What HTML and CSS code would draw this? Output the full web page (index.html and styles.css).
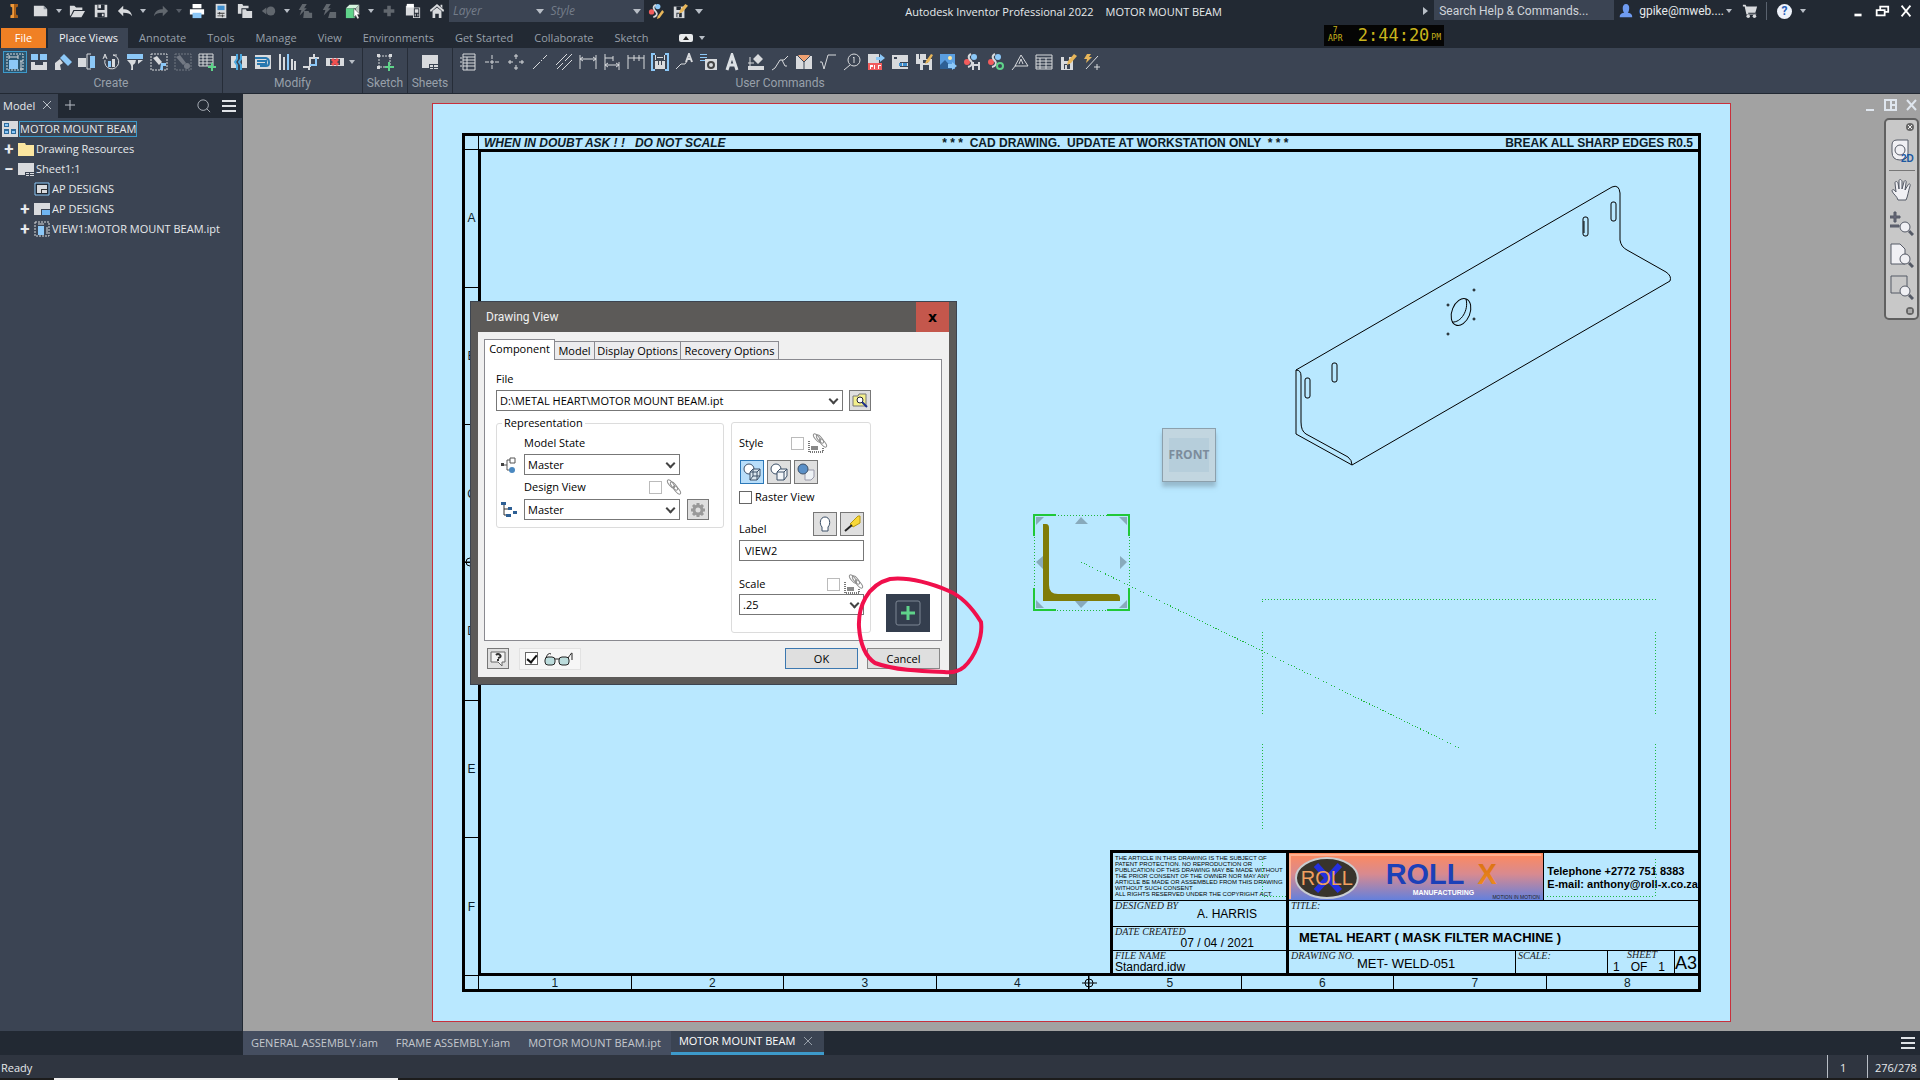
FILE: index.html
```html
<!DOCTYPE html>
<html lang="en">
<head>
  <meta charset="UTF-8">
  <meta name="viewport" content="width=device-width, initial-scale=1.0">
  <title>Autodesk Inventor Professional 2022 - MOTOR MOUNT BEAM</title>
  <link rel="stylesheet" href="styles.css">
</head>
<body>

  <!-- Title bar -->
  <header class="titlebar">
    <div class="quick">
      <svg class="ico app" viewBox="0 0 18 18"><path fill="#f09a3a" d="M5 1h8v3l-2 1v8l2 1v3H5v-3l2-1V5L5 4z"/><path fill="#a85c14" d="M9 1h4v3l-2 1v8l2 1v3H9z"/></svg>
      <button class="tool" aria-label="New"><svg class="ico" viewBox="0 0 18 18"><path d="M1 3h11l4 4v8H1z"/><path fill="#8d949d" d="M12 3v4h4z"/></svg></button>
      <i class="caret"></i>
      <button class="tool" aria-label="Open"><svg class="ico" viewBox="0 0 18 18"><path d="M1 3h5l2 2h7v3H5l-3 6H1z"/><path d="M6 9h12l-4 7H2z"/></svg></button>
      <button class="tool" aria-label="Save"><svg class="ico" viewBox="0 0 18 18"><path d="M2 2h14v14H2z"/><path fill="#222933" d="M5 2h8v6H5zM5 11h8v5H5z"/><path d="M6 2h3v4H6zM10 12h2v3h-2zM6 9h7v1H6z"/></svg></button>
      <button class="tool" aria-label="Undo"><svg class="ico" viewBox="0 0 18 18"><path d="M7 3v4c5 0 9 2 10 8-2-3-5-4-10-4v4L1 9z"/></svg></button>
      <i class="caret"></i>
      <button class="tool off" aria-label="Redo"><svg class="ico" viewBox="0 0 18 18"><path d="M11 3v4c-5 0-9 2-10 8 2-3 5-4 10-4v4l6-6z"/></svg></button>
      <i class="caret off"></i>
      <button class="tool" aria-label="Print"><svg class="ico" viewBox="0 0 18 18"><path fill="#fff" d="M4 1h10v5H4zM1 7h16v6H1z"/><path fill="#8cc8f8" d="M4 11h10v6H4z"/></svg></button>
      <button class="tool" aria-label="Properties"><svg class="ico" viewBox="0 0 18 18"><path d="M3 1h12v16H3z"/><path fill="#3f8fd0" d="M5 3h8v5H5z"/><path fill="#333" d="M5 11h8v1H5zM5 14h8v1H5zM7 10h1v3H7zM10 13h1v3h-1z"/></svg></button>
      <button class="tool" aria-label="Projects"><svg class="ico" viewBox="0 0 18 18"><path d="M1 1h5l1 2h6v3H5v6H1z"/><path d="M6 7h4l1 2h6v8H6z"/></svg></button>
      <button class="tool off" aria-label="Select"><svg class="ico" viewBox="0 0 18 18"><circle cx="11" cy="9" r="5"/><path d="M1 9l5-4v8z"/></svg></button>
      <i class="caret"></i>
      <button class="tool off" aria-label="Local update"><svg class="ico" viewBox="0 0 18 18"><path d="M6 1h5L8 6h3l-8 8 2-6H2zM8 9h5l1 2h3v6H7z"/></svg></button>
      <button class="tool off" aria-label="Global update"><svg class="ico" viewBox="0 0 18 18"><path d="M6 1h5L8 6h3l-8 8 2-6H2zM10 10h7v7h-9z"/></svg></button>
      <button class="tool" aria-label="Select bodies"><svg class="ico" viewBox="0 0 18 18"><path fill="#5fd38a" d="M1 6h10v11H1z"/><path fill="#d6f5df" d="M1 6l4-4h11l-4 4z"/><path fill="#b9c7bd" d="M12 6l4-4v10l-4 4z"/><path fill="#fff" stroke="#222" stroke-width=".5" d="M10 6l7 7h-3l2 4-2 1-2-4-2 2z"/></svg></button>
      <i class="caret"></i>
      <button class="tool off" aria-label="Add"><svg class="ico" viewBox="0 0 18 18"><path d="M7 3h4v4h4v4h-4v4H7v-4H3V7h4z"/></svg></button>
      <button class="tool" aria-label="Measure"><svg class="ico" viewBox="0 0 18 18"><path d="M1 3h9v11H1zM9 5h8v12H9z"/><path fill="#fff" d="M2 1h8v4H2z"/><path fill="#222933" d="M10 6h6v10h-6z"/><path d="M11 7h4v4h-4zM11 12h1v3h-1zM14 12h1v3h-1z"/></svg></button>
      <button class="tool" aria-label="Home"><svg class="ico" viewBox="0 0 18 18"><path d="M9 1l8 7-1 2-7-6-7 6-1-2z"/><path d="M4 9l5-4 5 4v8h-3v-5H7v5H4zM13 2h2v4l-2-2z"/></svg></button>
      <div class="lookup"><span>Layer</span><i class="caret"></i></div>
      <div class="lookup"><span>Style</span><i class="caret"></i></div>
      <button class="tool" aria-label="Styles editor"><svg class="ico" viewBox="0 0 18 18"><circle cx="11" cy="4" r="3" fill="#8cc8f8"/><circle cx="4" cy="10" r="3" fill="#f25c5c"/><path class="ln b" d="M9 2c-5 2-2 6 0 8s1 5-3 6"/><path fill="#e8b65a" d="M11 15l5-7 2 2-5 7-3 1z"/></svg></button>
      <button class="tool" aria-label="Save styles"><svg class="ico" viewBox="0 0 18 18"><path d="M2 4h12v13H2z"/><path fill="#222933" d="M5 4h5v4H5zM5 11h6v5H5z"/><path d="M6 12h2v4H6z"/><path fill="#e8b65a" d="M9 8l6-7 3 2-6 7-4 2z"/></svg></button>
      <i class="caret bar"></i>
    </div>
    <h1 class="caption"><span>Autodesk Inventor Professional 2022</span><span>MOTOR MOUNT BEAM</span></h1>
    <div class="account">
      <i class="caret right"></i>
      <input class="search" type="text" aria-label="Search" placeholder="Search Help &amp; Commands...">
      <svg class="ico user" viewBox="0 0 18 18"><path fill="#6f9bf0" d="M9 1c5 0 4 8 2 10 5 1 5 3 5 5H2c0-2 0-4 5-5C5 9 4 1 9 1z"/></svg>
      <a class="signin" href="#">gpike@mweb....</a><i class="caret"></i>
      <button class="tool cart" aria-label="Store"><svg class="ico" viewBox="0 0 18 18"><path d="M1 2h3l1 2h12l-2 7H7v1h9v1H5L3 4H1z"/><circle cx="7" cy="15" r="2"/><circle cx="14" cy="15" r="2"/></svg></button>
      <i class="rule"></i>
      <button class="help" aria-label="Help">?</button><i class="caret"></i>
    </div>
    <div class="winbtns">
      <button aria-label="Minimize"><svg class="ico" viewBox="0 0 18 18"><path fill="#fff" d="M5 12h8v3H5z"/></svg></button>
      <button aria-label="Restore"><svg class="ico" viewBox="0 0 18 18"><path fill="none" stroke="#fff" stroke-width="2" d="M7 7V4h9v6h-3M3 8h9v6H3z"/></svg></button>
      <button aria-label="Close"><svg class="ico" viewBox="0 0 18 18"><path fill="none" stroke="#fff" stroke-width="2" d="M4 3l10 12M14 3L4 15"/></svg></button>
    </div>
  </header>

  <!-- Ribbon tabs -->
  <nav class="tabs">
    <a class="file" href="#">File</a>
    <a class="active" href="#">Place Views</a>
    <a href="#">Annotate</a>
    <a href="#">Tools</a>
    <a href="#">Manage</a>
    <a href="#">View</a>
    <a href="#">Environments</a>
    <a href="#">Get Started</a>
    <a href="#">Collaborate</a>
    <a href="#">Sketch</a>
    <button class="fold" aria-label="Minimize ribbon"></button><i class="caret"></i>
    <div class="clock"><small>7<br>APR</small><b>2:44:20</b><small class="pm">PM</small></div>
  </nav>

  <!-- Ribbon panels -->
  <section class="ribbon">
    <div class="group create">
      <div class="icons">
        <button class="tool on" aria-label="Base view"><svg class="ico" viewBox="0 0 18 18"><path class="ln dash" d="M1 1h16v16H1z"/><path fill="#8cc8f8" d="M3 7h9v9H3z"/><path class="ln" d="M3 4h9M3 2v4M12 2v4M15 8v8M14 8h3M14 16h3"/></svg></button>
        <button class="tool" aria-label="Projected view"><svg class="ico" viewBox="0 0 18 18"><path fill="#8cc8f8" d="M1 1h7v6H1zM10 1h7v6h-7z"/><path d="M1 9h4v3h8V9h4v8H1z"/></svg></button>
        <button class="tool" aria-label="Auxiliary view"><svg class="ico" viewBox="0 0 18 18"><path fill="#8cc8f8" d="M6 5l4-4 8 8-4 4z"/><path d="M1 10l5-4 3 4-3 2 1 5H1z"/></svg></button>
        <button class="tool" aria-label="Section view"><svg class="ico" viewBox="0 0 18 18"><path d="M0 5h8v9H0z"/><path fill="#8cc8f8" d="M12 3h5v12h-5z"/><path class="ln" d="M13 1H9v15h4"/></svg></button>
        <button class="tool" aria-label="Detail view"><svg class="ico" viewBox="0 0 18 18"><path class="ln" d="M3 7a7 7 0 1 0 8-5M11 2h4"/><path class="ln" d="M1 6l2-5 2 5M2 4h2"/><path fill="#8cc8f8" d="M6 8h3v6H6z"/><path d="M10 6h3v8h-3z"/></svg></button>
        <button class="tool" aria-label="Overlay view"><svg class="ico" viewBox="0 0 18 18"><path fill="#8cc8f8" d="M1 1h16v5H1z"/><path d="M1 7h9c-1 3 0 3-3 5v5H5c1-4 0-6-4-10zM12 7h5l-5 4z"/></svg></button>
        <button class="tool" aria-label="Draft view"><svg class="ico" viewBox="0 0 18 18"><path class="ln dash" d="M1 1h16v16H1z"/><path d="M3 5l4-2 5 6-3 3z"/><path fill="#8cc8f8" d="M11 10h5v3h-3v4h-3z"/></svg></button>
        <button class="tool off" aria-label="Nailboard"><svg class="ico" viewBox="0 0 18 18"><path class="ln dash" d="M1 1h16v16H1z"/><path d="M2 4l4-2 6 8-3 2z"/><circle cx="13" cy="13" r="3"/></svg></button>
        <button class="tool" aria-label="Table"><svg class="ico" viewBox="0 0 18 18"><path class="ln" d="M1 1h14v12H1zM1 4h14M1 7h14M1 10h14M5 1v12M9 1v12"/><path fill="#5fd38a" d="M13 10h2v3h3v2h-3v3h-2v-3h-3v-2h3z"/></svg></button>
      </div>
      <span>Create</span>
    </div>
    <div class="group">
      <div class="icons">
        <button class="tool" aria-label="Break"><svg class="ico" viewBox="0 0 18 18"><path d="M1 3h5v12H1zM12 3h5v12h-5z"/><path fill="none" stroke="#4aa8e0" stroke-width="2" d="M7 1v5l-2 3 2 3v5M11 1v5l-2 3 2 3v5"/></svg></button>
        <button class="tool" aria-label="Break out"><svg class="ico" viewBox="0 0 18 18"><path d="M1 2h16v14H1z"/><path fill="none" stroke="#2878b0" stroke-width="2" d="M1 5h11c4 1 4 8 0 8H6M3 8h9v3H3"/></svg></button>
        <button class="tool" aria-label="Slice"><svg class="ico" viewBox="0 0 18 18"><path d="M1 1h2v16H1zM5 4h2v13H5zM13 6h2v11h-2zM16 8h2v9h-2z"/><path fill="#8cc8f8" d="M9 1h2v16H9z"/></svg></button>
        <button class="tool" aria-label="Alignment"><svg class="ico" viewBox="0 0 18 18"><path class="ln b" d="M1 14h6v3M8 14V5h9M12 1v4"/><path fill="none" stroke="#8cc8f8" stroke-width="2" d="M8 12h6V5"/></svg></button>
        <button class="tool" aria-label="Suppress"><svg class="ico" viewBox="0 0 18 18"><path d="M0 5h4v8H0zM14 5h4v8h-4z"/><path d="M4 5h10v1H4zM4 12h10v1H4z"/><path fill="none" stroke="#f05050" stroke-width="3" d="M6 6l6 6M12 6l-6 6"/></svg></button>
        <i class="caret"></i>
      </div>
      <span>Modify</span>
    </div>
    <div class="group small">
      <div class="icons"><button class="tool" aria-label="Start sketch"><svg class="ico" viewBox="0 0 18 18"><path class="ln dash" d="M3 3h11v11H3z"/><path d="M1 1h3v3H1zM13 1h3v3h-3zM1 13h3v3H1z"/><path fill="#5fd38a" d="M12 9h2v4h4v2h-4v3h-2v-3H9v-2h3z"/></svg></button></div>
      <span>Sketch</span>
    </div>
    <div class="group small">
      <div class="icons"><button class="tool" aria-label="New sheet"><svg class="ico" viewBox="0 0 18 18"><path d="M1 2h16v9H8v4H1z"/><path d="M9 12h3v2H9zM13 12h4v2h-4zM9 15h3v1H9zM13 15h4v1h-4z"/></svg></button></div>
      <span>Sheets</span>
    </div>
    <div class="group commands">
      <div class="icons">
        <button class="tool" aria-label="Parts list"><svg class="ico" viewBox="0 0 18 18"><path class="ln" d="M4 1h12v16H4zM4 4h12M4 7h12M4 10h12M4 13h12M8 4v13M1 5h2M1 9h2M1 13h2"/></svg></button>
        <button class="tool" aria-label="Center mark"><svg class="ico" viewBox="0 0 18 18"><path class="ln" d="M9 2v4M9 7v4M9 12v4M2 9h4M7 9h4M12 9h4"/></svg></button>
        <button class="tool" aria-label="Centered pattern"><svg class="ico" viewBox="0 0 18 18"><path class="ln" d="M9 1v5M7 3h4M9 12v5M7 15h4M1 9h5M3 7v4M12 9h5M15 7v4"/></svg></button>
        <button class="tool" aria-label="Centerline"><svg class="ico" viewBox="0 0 18 18"><path class="ln" d="M2 16l7-7M10 8l1-1M12 6l4-4"/></svg></button>
        <button class="tool" aria-label="Bisector"><svg class="ico" viewBox="0 0 18 18"><path class="ln" d="M1 12L12 1M2 16l6-6M10 8l7-7M7 17L17 7"/></svg></button>
        <button class="tool" aria-label="Dimension"><svg class="ico" viewBox="0 0 18 18"><path class="ln" d="M1 2v14M17 2v14M1 6h16M4 4L1 6l3 2M14 4l3 2-3 2"/></svg></button>
        <button class="tool" aria-label="Baseline"><svg class="ico" viewBox="0 0 18 18"><path class="ln" d="M2 1v16M2 5h8M10 3v5M2 12h14M16 9v8M5 10l-3 2 3 2M13 10l3 2-3 2"/></svg></button>
        <button class="tool" aria-label="Ordinate"><svg class="ico" viewBox="0 0 18 18"><path class="ln" d="M1 2v14M17 2v14M7 2v6M12 2v6M1 5h16"/></svg></button>
        <button class="tool" aria-label="Retrieve"><svg class="ico" viewBox="0 0 18 18"><path fill="none" stroke="#8cc8f8" stroke-width="2" d="M4 1H1v16h3M14 1h3v16h-3"/><path d="M4 8h10v8H4zM4 2h1v5H4zM13 2h1v5h-1zM6 4h6v1H6z"/><path fill="#3b4453" d="M7 8h1v4H7zM10 8h1v4h-1z"/></svg></button>
        <button class="tool" aria-label="Leader text"><svg class="ico" viewBox="0 0 18 18"><path class="ln" d="M1 16l5-5h4l2-3"/><path class="ln b" d="M11 9l3-8 3 8M12 6h4"/></svg></button>
        <button class="tool" aria-label="Hole note"><svg class="ico" viewBox="0 0 18 18"><path fill="#8cc8f8" d="M1 1h7v1H1zM1 4h7v1H1zM1 7h5v1H1z"/><path d="M6 6h12v11H6z"/><circle cx="12" cy="12" r="3" fill="none" stroke="#444" stroke-width="2"/></svg></button>
        <button class="tool" aria-label="Text"><svg class="ico" viewBox="0 0 18 18"><path fill="none" stroke="#dde1e5" stroke-width="3" d="M4 17L9 2l5 15M6 12h6"/></svg></button>
        <button class="tool" aria-label="Surface"><svg class="ico" viewBox="0 0 18 18"><path d="M1 13h16v4H1zM11 1l5 5-5 5-5-5z"/><path class="ln" d="M1 10h6M3 4v9"/></svg></button>
        <button class="tool" aria-label="Datum leader"><svg class="ico" viewBox="0 0 18 18"><path class="ln" d="M1 17l3-2 5-8h4l4-4M11 7l3 6h2"/></svg></button>
        <button class="tool" aria-label="Weld"><svg class="ico" viewBox="0 0 18 18"><path d="M1 3h16v13H1z"/><path fill="#f0a070" d="M3 2h12L9 9z"/><path class="lnk" d="M3 3l6 6 6-6M9 9v7"/></svg></button>
        <button class="tool" aria-label="Root symbol"><svg class="ico" viewBox="0 0 18 18"><path class="ln" d="M1 9h2l2 7L9 2h8"/></svg></button>
        <button class="tool" aria-label="Balloon"><svg class="ico" viewBox="0 0 18 18"><circle class="ln" cx="11" cy="7" r="6"/><path class="ln" d="M7 12l-6 5M11 4v6M10 5l1-1"/></svg></button>
        <button class="tool" aria-label="Export PDF"><svg class="ico" viewBox="0 0 18 18"><path d="M1 1h11v10H1z"/><path fill="#f25c5c" d="M1 10h14v7H1z"/><path fill="#fff" d="M3 12h1v4H3zM7 12h1v4H7zM11 12h1v4h-1zM4 12h2v2H4zM12 12h2v1h-2z"/><path fill="#8cc8f8" d="M9 4h4V1l5 4-5 4V7H9z"/></svg></button>
        <button class="tool" aria-label="Sheet format"><svg class="ico" viewBox="0 0 18 18"><path d="M1 2h16v14H1z"/><path fill="#3b4453" d="M3 4h3v2H3zM9 9h8v1H9zM9 13h8v1H9z"/><path fill="#3f8fd0" d="M8 10h3v3H8zM12 10h4v3h-4z"/></svg></button>
        <button class="tool" aria-label="Save copy"><svg class="ico" viewBox="0 0 18 18"><path d="M1 1h10v10H1zM5 6h12v11H5z"/><path fill="#3b4453" d="M4 1h1v5H4zM8 7h5v3H8zM8 12h6v5H8z"/><path fill="#e8b65a" d="M11 8l5-7 2 1-4 7-4 2z"/></svg></button>
        <button class="tool" aria-label="Export image"><svg class="ico" viewBox="0 0 18 18"><path fill="#5a9ee0" d="M1 1h15v15H1z"/><circle cx="11" cy="5" r="2" fill="#ffe9a0"/><path fill="#2d5f94" d="M1 12l5-5 8 9H1z"/><path fill="#8cc8f8" d="M9 11h4V9l5 4-5 4v-2H9z"/></svg></button>
        <button class="tool" aria-label="Save style"><svg class="ico" viewBox="0 0 18 18"><circle cx="11" cy="4" r="3" fill="#8cc8f8"/><circle cx="4" cy="9" r="3" fill="#f25c5c"/><path class="ln b" d="M8 1c-4 2-2 5 0 7s1 5-3 6"/><path d="M9 9h8v8H9z"/><path fill="#3b4453" d="M11 9h4v2h-4zM11 13h4v4h-4z"/></svg></button>
        <button class="tool" aria-label="Update styles"><svg class="ico" viewBox="0 0 18 18"><circle cx="11" cy="4" r="3" fill="#8cc8f8"/><circle cx="4" cy="9" r="3" fill="#f25c5c"/><path class="ln b" d="M8 1c-4 2-2 5 0 7s1 5-3 6"/><circle cx="13" cy="13" r="3" fill="none" stroke="#5fd38a" stroke-width="2"/></svg></button>
        <button class="tool" aria-label="Datum target"><svg class="ico" viewBox="0 0 18 18"><path class="ln" d="M10 2l7 11H4zM5 12l-4 5M8 11l2-5 2 5"/></svg></button>
        <button class="tool" aria-label="Revision table"><svg class="ico" viewBox="0 0 18 18"><path class="ln" d="M1 2h16v14H1zM1 5h16M1 8h16M1 11h16M1 14h16M5 5v11M11 5v11"/></svg></button>
        <button class="tool" aria-label="Save edit"><svg class="ico" viewBox="0 0 18 18"><path d="M2 4h12v13H2z"/><path fill="#3b4453" d="M5 4h5v4H5zM5 11h6v5H5z"/><path d="M6 12h2v4H6z"/><path fill="#e8b65a" d="M9 8l6-7 3 2-6 7-4 2z"/></svg></button>
        <button class="tool" aria-label="Quick line"><svg class="ico" viewBox="0 0 18 18"><path fill="#e8b65a" d="M4 1h4L6 4h3l-6 6 1-4H1z"/><path class="ln" d="M3 16L15 3M14 11v6M11 14h6"/></svg></button>
      </div>
      <span>User Commands</span>
    </div>
  </section>

  <main class="work">
    <!-- Model browser -->
    <aside class="browser">
      <div class="browser-head">
        <a class="browser-tab" href="#">Model <svg viewBox="0 0 10 10"><path d="M1 1l8 8M9 1L1 9"/></svg></a>
        <button class="plus" aria-label="Add tab"><svg viewBox="0 0 10 10"><path d="M5 0v10M0 5h10"/></svg></button>
        <button class="find" aria-label="Find"><svg viewBox="0 0 16 16"><circle cx="7" cy="7" r="6"/><path d="M11 11l4 4"/></svg></button>
        <button class="menu" aria-label="Menu"></button>
      </div>
      <ul class="tree">
        <li><svg class="ico" viewBox="0 0 16 16"><path d="M0 0h16v16H0z"/><path fill="#2d6b9c" d="M2 2h5v4H2zM2 8h5v5H2zM9 8h5v5H9z"/><path fill="#8cc8f8" d="M3 3h3v2H3zM3 10h3v2H3zM10 10h3v2h-3z"/></svg><span class="sel">MOTOR MOUNT BEAM</span></li>
        <li class="l1"><i>+</i><svg class="ico" viewBox="0 0 16 16"><path fill="#fbe6a0" d="M0 2h7l1 2h8v11H0z"/></svg><span>Drawing Resources</span></li>
        <li class="l1"><i>&#8722;</i><svg class="ico" viewBox="0 0 16 16"><path d="M0 2h16v9H7v3H0z"/><path d="M8 12h3v1H8zM12 12h4v1h-4zM8 14h3v1H8zM12 14h4v1h-4z"/></svg><span>Sheet1:1</span></li>
        <li class="l2"><i></i><svg class="ico" viewBox="0 0 16 16"><path fill="#222933" stroke="#8cc8f8" d="M1 2h14v12H1z"/><path d="M3 4h10v8H3z"/><path fill="#333" d="M7 8h6v1H7zM7 8h1v4H7z"/></svg><span>AP DESIGNS</span></li>
        <li class="l2"><i>+</i><svg class="ico" viewBox="0 0 16 16"><path d="M0 2h16v6H7v6H0z"/><path fill="#6fb4f0" d="M8 9h8v5H8z"/></svg><span>AP DESIGNS</span></li>
        <li class="l2"><i>+</i><svg class="ico" viewBox="0 0 16 16"><path class="ln dash" d="M1 1h14v14H1z"/><path fill="#8cc8f8" d="M4 5h6v9H4z"/><path class="ln" d="M4 3h6M13 6v7"/></svg><span>VIEW1:MOTOR MOUNT BEAM.ipt</span></li>
      </ul>
    </aside>

    <!-- Drawing area -->
    <div class="canvas">
      <div class="sheet">
        <div class="frame">
          <div class="strip-top">
            <em>WHEN IN DOUBT ASK ! ! &nbsp; DO NOT SCALE</em>
            <span>* * * &nbsp;CAD DRAWING. &nbsp;UPDATE AT WORKSTATION ONLY &nbsp;* * *</span>
            <span>BREAK ALL SHARP EDGES R0.5</span>
          </div>
          <div class="strip-left"><span>A</span><span>B</span><span>C</span><span>D</span><span>E</span><span>F</span></div>
          <div class="field">
            <div class="titleblock">
              <div class="tb-left">
                <p class="notice">THE ARTICLE IN THIS DRAWING IS THE SUBJECT OF<br>PATENT PROTECTION. NO REPRODUCTION OR<br>PUBLICATION OF THIS DRAWING MAY BE MADE WITHOUT<br>THE PRIOR CONSENT OF THE OWNER NOR MAY ANY<br>ARTICLE BE MADE OR ASSEMBLED FROM THIS DRAWING<br>WITHOUT SUCH CONSENT<br>ALL RIGHTS RESERVED UNDER THE COPYRIGHT ACT.</p>
                <div class="cell r1"><cite>DESIGNED BY</cite><span>A. HARRIS</span></div>
                <div class="cell r2"><cite>DATE CREATED</cite><span>07 / 04 / 2021</span></div>
                <div class="cell r3 plain"><cite>FILE NAME</cite><span>Standard.idw</span></div>
              </div>
              <div class="tb-right">
                <div class="brandrow">
                  <svg class="brand" viewBox="0 0 255 47">
                    <defs>
                      <linearGradient id="bg" x2="0" y2="1"><stop offset="0" stop-color="#ff8a5c"/><stop offset=".45" stop-color="#d88a90"/><stop offset="1" stop-color="#6480dc"/></linearGradient>
                      <linearGradient id="ox" x2="0" y2="1"><stop offset="0" stop-color="#d86c10"/><stop offset="1" stop-color="#f09020"/></linearGradient>
                    </defs>
                    <path fill="url(#bg)" d="M0 0h255v47H0z"/>
                    <path fill="none" stroke="#ffb090" stroke-width="2" d="M1 46V2h252"/>
                    <ellipse cx="38" cy="25" rx="31" ry="20" fill="#38342c" stroke="#c8ccd0" stroke-width="2"/>
                    <path stroke="#2430e0" stroke-width="6" d="M27 12l24 26M51 12L27 38"/>
                    <text x="38" y="32" text-anchor="middle" class="b1">ROLL</text>
                    <text x="97" y="31" class="b2">ROLL</text>
                    <text x="189" y="31" class="b3">X</text>
                    <text x="124" y="42" class="b4">MANUFACTURING</text>
                    <text x="204" y="46" class="b5">MOTION IN MOTION</text>
                  </svg>
                  <div class="contact">Telephone +2772 751 8383<br>E-mail: anthony@roll-x.co.za</div>
                </div>
                <div class="cell r1"><cite>TITLE:</cite></div>
                <div class="cell r2 project">METAL HEART ( MASK FILTER MACHINE )</div>
                <div class="lastrow">
                  <div class="cell r3 number"><cite>DRAWING NO.</cite><span>MET- WELD-051</span></div>
                  <div class="cell r3 scale"><cite>SCALE:</cite></div>
                  <div class="cell r3 count"><cite>SHEET</cite><span>1</span><span>OF</span><span>1</span></div>
                  <div class="cell r3 size">A3</div>
                </div>
              </div>
            </div>
          </div>
          <div class="strip-bottom"><span>1</span><span>2</span><span>3</span><span>4</span><span>5</span><span>6</span><span>7</span><span>8</span></div>
        </div>

        <!-- Views placed on the sheet -->
        <svg class="views" viewBox="432 103 1299 919">
          <g class="beam">
            <path d="M1296 370L1612 187q7-3 8 6V240q1 7 7 10L1666 272q6 4 4 9L1352 465 1296 434z"/>
            <path d="M1296 370q5 0 5 6V422q0 9 5 12L1348 457q4 3 4 8"/>
            <rect x="1305" y="378" width="5" height="20" rx="2"/>
            <rect x="1332" y="363" width="5" height="19" rx="2"/>
            <rect x="1583" y="217" width="5" height="19" rx="2"/><path d="M1584 221v12"/>
            <rect x="1611" y="202" width="5" height="19" rx="2"/>
            <ellipse cx="1461" cy="312" rx="9" ry="14" transform="rotate(22 1461 312)"/>
            <path d="M1452 322c9 1 17-12 14-23"/>
            <circle cx="1448" cy="305" r="1"/><circle cx="1474" cy="290" r="1"/><circle cx="1474" cy="319" r="1"/><circle cx="1448" cy="334" r="1"/>
          </g>
          <g class="preview">
            <path d="M1262 602v-3h393v3M1262 632v82M1262 744v85M1262 859v37h24M1655 632v82M1655 744v85M1655 859v37h-110M1081 562L1459 748M1034 515h95v95h-95z"/>
          </g>
          <path class="corners" d="M1034 536v-21h22M1107 515h22v21M1129 588v22h-22M1056 610h-22v-22"/>
          <path class="arrows" d="M1036 517h8l-8 8zM1119 517h8v8zM1036 600v8h8zM1127 600v8h-8zM1075 524l6-7 7 7zM1075 601h13l-7 7zM1043 556v13l-7-7zM1120 556v13l7-7z"/>
          <path class="angle" d="M1043 524h3q3 0 3 4V585q0 9 9 9h58q4 0 4 4v3h-77z"/>
          <g class="mark"><circle cx="1089" cy="983" r="4"/><path d="M1082 983h15M1089 976v15"/><circle cx="470" cy="562" r="4"/><path d="M464 562h14"/></g>
        </svg>
        <div class="cube"><span>FRONT</span></div>
      </div>

      <div class="docbtns">
        <button aria-label="Minimize"><svg viewBox="0 0 14 14"><path d="M3 12h8"/></svg></button>
        <button aria-label="Restore"><svg viewBox="0 0 14 14"><path d="M1 2h11v10H1zM7 2v10M7 7h5"/></svg></button>
        <button aria-label="Close"><svg viewBox="0 0 14 14"><path d="M2 2l9 10M11 2L2 12"/></svg></button>
      </div>

      <!-- Navigation bar -->
      <div class="navbar">
        <button class="dot" aria-label="Close bar"><svg viewBox="0 0 10 10"><circle cx="5" cy="5" r="4" fill="#666"/><path stroke="#eee" d="M3 3l4 4M7 3L3 7"/></svg></button>
        <button aria-label="Steering wheel"><svg viewBox="0 0 24 24"><path d="M2 6q0-5 5-5h11v13q0 7-8 7-8 0-8-8z"/><circle cx="10" cy="11" r="5"/><text x="11" y="23">2D</text></svg></button>
        <hr>
        <button aria-label="Pan"><svg viewBox="0 0 24 24"><path d="M8 22c-1-4-5-6-6-9 0-2 2-2 4 1L5 5c0-2 2-2 3 0l1 6V3c0-2 2-2 3 0v8l2-7c0-2 3-2 2 1l-1 7 3-5c1-2 3-1 2 1-2 6-2 10-4 14z"/></svg></button>
        <button aria-label="Zoom"><svg viewBox="0 0 24 24"><path fill="#667" d="M4 1h2v4h4v2H6v4H4V7H0V5h4zM0 14h9v2H0z"/><circle cx="15" cy="16" r="5"/><path class="h" d="M19 20l4 4"/></svg></button>
        <button aria-label="Zoom all"><svg viewBox="0 0 24 24"><path d="M1 1h9l5 5v15H1z"/><circle cx="15" cy="16" r="5"/><path class="h" d="M19 20l4 4"/></svg></button>
        <button aria-label="Zoom window"><svg viewBox="0 0 24 24"><path class="none" d="M1 1h16v17H1z"/><circle cx="15" cy="16" r="5"/><path class="h" d="M19 20l4 4"/></svg></button>
        <button class="dot" aria-label="Customize"><svg viewBox="0 0 10 10"><circle cx="5" cy="5" r="4" fill="#666"/><path stroke="#eee" d="M3 4h4M3 6h4"/></svg></button>
      </div>

      <!-- Drawing View dialog -->
      <form class="dialog">
        <div class="dialog-title"><h2>Drawing View</h2><button type="button" aria-label="Close">x</button></div>
        <div class="dialog-body">
          <div class="dtabs">
            <button type="button" class="active">Component</button><button type="button">Model</button><button type="button">Display Options</button><button type="button">Recovery Options</button>
          </div>
          <div class="page">
            <label for="file">File</label>
            <div class="filerow">
              <span class="combo"><select id="file"><option>D:\METAL HEART\MOTOR MOUNT BEAM.ipt</option></select></span>
              <button type="button" class="sq" aria-label="Browse"><svg viewBox="0 0 16 16"><path fill="#f4f08c" stroke="#777" d="M1 3h5l1-2h7v12H1z"/><circle cx="8" cy="7" r="3" fill="#fff" stroke="#223"/><path stroke="#1c2f8c" stroke-width="2" d="M10 9l5 5"/></svg></button>
            </div>
            <div class="columns">
              <fieldset class="rep">
                <legend>Representation</legend>
                <label for="state">Model State</label>
                <div class="reprow">
                  <svg class="pic" viewBox="0 0 16 16"><path fill="none" stroke="#555" d="M1 8h5M6 3v10h4M6 3h3M9 1h5v5H9z"/><path fill="#444" d="M0 6h3v3H0z"/><circle cx="11" cy="13" r="3" fill="#4a88c0"/></svg>
                  <span class="combo"><select id="state"><option>Master</option></select></span>
                </div>
                <div class="labelrow"><label for="design">Design View</label><input type="checkbox" disabled aria-label="Associative"><svg class="pic" viewBox="0 0 16 16"><g class="chain"><ellipse cx="5" cy="5" rx="5" ry="2" transform="rotate(50 5 5)"/><ellipse cx="8" cy="7" rx="5" ry="2" transform="rotate(50 8 7)"/><ellipse cx="11" cy="11" rx="5" ry="2" transform="rotate(50 11 11)"/></g></svg></div>
                <div class="reprow">
                  <svg class="pic" viewBox="0 0 16 16"><path fill="none" stroke="#333" d="M3 3v10h3M3 7h5"/><path fill="#2d5f94" d="M0 0h5v3H0zM7 5h4v3H7zM5 12h5v3H5zM12 9h4v3h-4z"/></svg>
                  <span class="combo"><select id="design"><option>Master</option></select></span>
                  <button type="button" class="sq gear" aria-label="Options"><svg viewBox="0 0 16 16"><circle cx="8" cy="8" r="4"/><path d="M8 1v3M8 12v3M1 8h3M12 8h3M3 3l2 2M11 11l2 2M13 3l-2 2M3 13l2-2"/></svg></button>
                </div>
              </fieldset>
              <div class="style">
                <div class="labelrow"><span>Style</span><input type="checkbox" disabled aria-label="Style from base"><svg class="pic from" viewBox="0 0 20 20"><path class="dots" d="M1 8v11h14v-4"/><path fill="#888" d="M3 13h7v4H3z"/><g class="chain"><ellipse cx="9" cy="5" rx="5" ry="2" transform="rotate(50 9 5)"/><ellipse cx="12" cy="6" rx="5" ry="2" transform="rotate(50 12 6)"/><ellipse cx="15" cy="10" rx="5" ry="2" transform="rotate(50 15 10)"/></g></svg></div>
                <div class="modes">
                  <button type="button" class="sq big on" aria-label="Hidden line"><svg viewBox="0 0 18 18"><circle cx="6" cy="6" r="5" fill="#fff"/><path fill="#dbe6ee" d="M7 9l3-3h7v7l-3 4H7zM7 9h7v8M14 9l3-3M10 6v7M10 13h7M10 13l-3 4"/></svg></button>
                  <button type="button" class="sq big" aria-label="Hidden line removed"><svg viewBox="0 0 18 18"><circle cx="6" cy="6" r="5" fill="#fff"/><path fill="#f2f5f8" d="M7 9l3-3h7v7l-3 4H7zM7 9h7v8M14 9l3-3"/></svg></button>
                  <button type="button" class="sq big" aria-label="Shaded"><svg viewBox="0 0 18 18"><path fill="#eef2f6" stroke="#99a" d="M8 9l2-2h7v7l-3 3H8z"/><circle cx="6" cy="6" r="5" fill="#5a90c8"/></svg></button>
                </div>
                <div class="raster"><input type="checkbox" id="raster"><label for="raster">Raster View</label></div>
                <div class="labelrow tall"><label for="label">Label</label>
                  <button type="button" class="sq big first" aria-label="Visibility"><svg viewBox="0 0 18 18"><path fill="#fff" d="M6 16v-4C3 9 4 2 9 2s6 7 3 10v4z"/></svg></button>
                  <button type="button" class="sq big" aria-label="Edit label"><svg viewBox="0 0 18 18"><path fill="#f8d838" stroke="#b89810" d="M7 9l8-8h2v7l-7 4z"/><path stroke="#222" stroke-width="2" d="M2 16l7-6"/></svg></button>
                </div>
                <input type="text" id="label" value="VIEW2">
                <div class="labelrow scalerow"><label for="scale">Scale</label><input type="checkbox" disabled aria-label="Scale from base"><svg class="pic from" viewBox="0 0 20 20"><path class="dots" d="M1 8v11h14v-4"/><path fill="#888" d="M3 13h7v4H3z"/><g class="chain"><ellipse cx="9" cy="5" rx="5" ry="2" transform="rotate(50 9 5)"/><ellipse cx="12" cy="6" rx="5" ry="2" transform="rotate(50 12 6)"/><ellipse cx="15" cy="10" rx="5" ry="2" transform="rotate(50 15 10)"/></g></svg></div>
                <span class="combo"><select id="scale"><option>.25</option></select></span>
              </div>
              <button type="button" class="addview" aria-label="Add view"><svg viewBox="0 0 26 26"><rect x="1" y="1" width="24" height="24" rx="2"/><path d="M13 6v14M6 13h14"/></svg></button>
            </div>
          </div>
          <div class="actions">
            <button type="button" class="sq" aria-label="Help"><svg viewBox="0 0 16 16"><path fill="#f4f4f4" stroke="#666" d="M1 1h14v10h-3v4l-4-4H1z"/><path fill="none" stroke="#333" stroke-width="2" d="M6 4q2-2 4 0t-2 3M8 8v2"/></svg></button>
            <span class="glasses"><input type="checkbox" checked aria-label="Preview"><svg viewBox="0 0 30 16"><rect x="1" y="6" width="10" height="8" rx="3"/><rect x="15" y="6" width="10" height="8" rx="3"/><path d="M11 8h4M2 7q2-6 5-4M24 7q4-6 4-5v7"/></svg></span>
            <button type="button" class="push ok">OK</button>
            <button type="button" class="push">Cancel</button>
          </div>
        </div>
        <svg class="scribble" viewBox="0 0 130 104"><path d="M4 52C3 32 12 10 35 4c18-2 40 4 59 12 14 6 24 18 32 31 2 15-6 35-17 45-6 5-12 6-20 5-25-1-50-2-69-9C8 80 5 66 4 52z"/></svg>
      </form>
    </div>
  </main>

  <nav class="docs">
    <a href="#">GENERAL ASSEMBLY.iam</a>
    <a href="#">FRAME ASSEMBLY.iam</a>
    <a href="#">MOTOR MOUNT BEAM.ipt</a>
    <a class="active" href="#">MOTOR MOUNT BEAM <svg viewBox="0 0 8 8"><path d="M0 0l8 8M8 0L0 8"/></svg></a>
    <button class="menu" aria-label="Document list"></button>
  </nav>
  <footer class="status"><span>Ready</span><span class="num">1</span><span class="num mem">276/278</span></footer>
  <div class="taskbar"></div>

</body>
</html>
```
FILE: styles.css
```css
* {
  box-sizing: border-box;
}

body {
  margin: 0;
  height: 100vh;
  display: flex;
  flex-direction: column;
  overflow: hidden;
  background: #222933;
  color: #e6e9ec;
  font: 11px/16px "Open Sans", "Noto Sans", sans-serif;
}

button {
  font: inherit;
  color: inherit;
  background: none;
  border: 0;
  padding: 0;
  margin: 0;
}

a {
  color: inherit;
  text-decoration: none;
}

.ico {
  display: block;
  width: 16px;
  height: 16px;
  flex: none;
  fill: #d8dadd;
}

.ico .ln {
  fill: none;
  stroke: #d8dadd;
}

.ico .b {
  stroke-width: 2;
}

.ico .dash {
  stroke-dasharray: 2 1;
}

.ico .lnk {
  fill: none;
  stroke: #3b4453;
}

.tool {
  width: 24px;
  height: 22px;
  flex: none;
  display: flex;
  align-items: center;
  justify-content: center;
}

.tool.off .ico,
.caret.off {
  opacity: .35;
}

.caret {
  flex: none;
  width: 0;
  height: 0;
  margin: 0 4px 0 2px;
  border: 3px solid transparent;
  border-top: 4px solid #b8bec6;
  border-bottom: 0;
}

.caret.right {
  border: 4px solid transparent;
  border-left: 5px solid #b8bec6;
  border-right: 0;
}

.caret.bar {
  border-width: 5px 4px 0;
  margin-left: 4px;
}

/* title bar */
.titlebar {
  height: 28px;
  display: flex;
  align-items: flex-start;
}

.quick,
.account,
.winbtns {
  display: flex;
  align-items: center;
  height: 22px;
}

.quick {
  width: 706px;
  padding-left: 6px;
}

.app {
  margin-right: 7px;
}

.quick .caret {
  margin: 0 3px 0 3px;
}

.lookup {
  display: flex;
  align-items: center;
  justify-content: space-between;
  width: 100px;
  height: 22px;
  padding: 0 0 0 4px;
  background: #3b4453;
  color: #747d8a;
  font-style: italic;
  font-size: 12px;
}

.lookup .caret {
  border-width: 5px 4px 0;
}

.caption {
  flex: 1;
  display: flex;
  justify-content: center;
  gap: 12px;
  margin: 0;
  padding: 4px 0 0;
  font: inherit;
}

.account {
  font: 12px/16px Roboto, "Liberation Sans", sans-serif;
}

.account .search {
  width: 180px;
  height: 20px;
  margin: 0 4px 2px 4px;
  padding: 2px 5px 0;
  border: 0;
  background: #3b4453;
  font: inherit;
}

.search::placeholder {
  color: #d0d4da;
}

.signin {
  margin-left: 5px;
}

.account .rule {
  width: 1px;
  height: 18px;
  background: #5a626e;
  margin-right: 10px;
}

.account .caret {
  margin: 0 2px;
}

.tool.cart {
  width: 32px;
}

.help {
  width: 15px;
  height: 15px;
  border-radius: 8px;
  background: #eef2fa;
  color: #2860b8;
  font-weight: bold;
  line-height: 15px;
  margin-right: 6px;
}

.winbtns {
  margin-left: 38px;
  padding-right: 2px;
}

.winbtns button {
  width: 24px;
  display: flex;
  justify-content: center;
}

/* ribbon tabs */
.tabs {
  height: 20px;
  display: flex;
  align-items: center;
  color: #98a0aa;
  padding-left: 1px;
}

.tabs a {
  padding: 0 10px 0 11px;
  line-height: 20px;
}

.tabs .file {
  width: 45px;
  margin-right: 2px;
  padding: 0;
  text-align: center;
  background: #f08024;
  color: #fff;
}

.tabs .active {
  background: #3b4453;
  color: #f0f2f4;
}

.fold {
  width: 14px;
  height: 8px;
  margin: 0 4px 0 21px;
  border-radius: 2px;
  background: #e8eaec;
  display: flex;
  justify-content: center;
  align-items: center;
}

.fold::after {
  content: "";
  border: 3px solid transparent;
  border-bottom: 4px solid #222;
  border-top: 0;
}

.clock {
  display: flex;
  align-items: center;
  width: 120px;
  height: 21px;
  margin: 0 476px 6px auto;
  padding-left: 4px;
  background: #050505;
  color: #c8b41c;
  font-family: "DejaVu Sans Mono", monospace;
}

.clock small {
  font-size: 8px;
  line-height: 8px;
  text-align: center;
}

.clock b {
  flex: 1;
  font-weight: normal;
  font-size: 17px;
  text-align: right;
}

.clock .pm {
  padding: 6px 3px 0 2px;
}

/* ribbon */
.ribbon {
  display: flex;
  height: 46px;
  background: #3b4453;
  border-bottom: 1px solid #222933;
}

.group {
  display: flex;
  flex-direction: column;
  align-items: center;
  width: 140px;
  padding-top: 3px;
  border-right: 1px solid #262d38;
  color: #98a0aa;
  font: 12px/16px Roboto, "Liberation Sans", sans-serif;
}

.group span {
  margin-top: 2px;
}

.group.create {
  width: 223px;
}

.group.small {
  width: 45px;
}

.group.commands {
  width: 654px;
  border: 0;
}

.icons {
  display: flex;
  align-items: center;
}

.icons .ico {
  width: 18px;
  height: 18px;
}

.tool.on {
  border: 1px solid #3d9acb;
  background: #2c5670;
}

/* model browser */
.work {
  flex: 1;
  min-height: 0;
  display: flex;
}

.browser {
  width: 243px;
  background: #3b4453;
  border-right: 1px solid #222933;
}

.browser-head {
  height: 24px;
  display: flex;
  align-items: center;
  background: #222933;
}

.browser-head svg {
  width: 10px;
  height: 10px;
  fill: none;
  stroke: #b8bec6;
  stroke-width: 1;
}

.browser-tab {
  width: 58px;
  padding-left: 3px;
  line-height: 24px;
  background: #3b4453;
  white-space: nowrap;
}

.browser-tab svg {
  margin-left: 4px;
}

.plus {
  margin: 0 auto 0 7px;
}

.browser-head .find svg {
  width: 14px;
  height: 16px;
}

.find {
  display: flex;
}

.menu {
  width: 14px;
  height: 12px;
  margin: 0 6px 0 11px;
  border-top: 2px solid #dfe2e6;
  border-bottom: 2px solid #dfe2e6;
}

.menu::after {
  content: "";
  display: block;
  height: 2px;
  background: #dfe2e6;
}

.tree {
  list-style: none;
  margin: 0;
  padding: 1px 0;
}

.tree li {
  display: flex;
  align-items: center;
  gap: 2px;
  height: 20px;
  padding-left: 2px;
}

.tree .l2 {
  padding-left: 18px;
}

.tree i {
  width: 14px;
  font: bold 17px/20px Roboto, sans-serif;
  text-align: center;
}

.tree .sel {
  line-height: 14px;
  outline: 1px solid #3d9acb;
}

/* drawing area */
.canvas {
  flex: 1;
  position: relative;
  display: flex;
  padding: 9px 189px;
  background: #a2a2a2;
}

.sheet {
  flex: 1;
  position: relative;
  display: flex;
  padding: 29px;
  background: #b9e8ff;
  border: 1px solid #c8303c;
  color: #0c1c28;
  font: 12px/16px "Liberation Sans", Arial, sans-serif;
}

.frame {
  flex: 1;
  display: grid;
  grid-template-columns: 13px 1fr;
  grid-template-rows: 13px 1fr 13px;
  border: 3px solid #000;
}

.strip-top {
  grid-column: 2;
  display: flex;
  justify-content: space-between;
  padding: 0 5px;
  border-left: 1px solid #000;
  font-weight: bold;
  line-height: 14px;
}

.strip-left {
  grid-column: 1;
  display: flex;
  flex-direction: column;
  border-top: 1px solid #000;
  border-bottom: 1px solid #000;
}

.strip-left span {
  flex: 1;
  display: flex;
  align-items: center;
  justify-content: center;
}

.strip-left span + span {
  border-top: 1px solid #000;
}

.strip-bottom {
  grid-column: 2;
  display: grid;
  grid-template-columns: repeat(8, 1fr);
}

.strip-bottom span {
  border-left: 1px solid #000;
  text-align: center;
  line-height: 14px;
}

.strip-bottom span + span {
  padding-left: 10px;
}

.field {
  display: flex;
  align-items: flex-end;
  justify-content: flex-end;
  border: 3px solid #000;
  border-right: 0;
}

/* title block */
.titleblock {
  display: flex;
  border-top: 3px solid #000;
  border-left: 3px solid #000;
  color: #000;
}

.tb-left {
  width: 173px;
}

.tb-right {
  width: 412px;
  border-left: 3px solid #000;
}

.notice {
  height: 47px;
  margin: 0;
  padding: 2px;
  font-size: 6px;
  line-height: 6px;
  white-space: nowrap;
}

.cell {
  position: relative;
  border-top: 1px solid #000;
  padding: 0 2px;
}

.cell cite {
  position: absolute;
  left: 2px;
  top: 0;
  font: italic 10px/9px "Liberation Serif", serif;
  color: #222;
}

.r1 {
  height: 26px;
}

.r2 {
  height: 24px;
}

.r3 {
  height: 23px;
}

.tb-left .cell span {
  display: block;
  padding: 9px 30px 0 0;
  text-align: right;
  line-height: 14px;
}

.tb-left .r1 span {
  padding: 6px 27px 0 0;
}

.tb-left .plain span {
  padding: 10px 0 0;
  text-align: left;
  line-height: 12px;
}

.brandrow,
.lastrow {
  display: flex;
}

.brand {
  width: 255px;
  height: 47px;
}

.brand text {
  font-family: "Liberation Sans", sans-serif;
}

.brand .b1 {
  font-size: 20px;
  fill: #f0a060;
}

.brand .b2 {
  font-size: 29px;
  font-weight: bold;
  fill: #1c40b8;
}

.brand .b3 {
  font-size: 29px;
  font-weight: bold;
  fill: url(#ox);
}

.brand .b4 {
  font-size: 7px;
  font-weight: bold;
  fill: #fff;
}

.brand .b5 {
  font-size: 5px;
  fill: #222;
}

.contact {
  flex: 1;
  border-left: 1px solid #000;
  padding: 12px 0 0 3px;
  font-weight: bold;
  font-size: 11px;
  line-height: 13px;
  white-space: nowrap;
}

.project {
  padding-left: 10px;
  font-weight: bold;
  font-size: 13px;
  line-height: 22px;
}

.number {
  width: 226px;
  padding: 5px 0 0 68px;
  font-size: 13px;
}

.scale {
  width: 92px;
  border-left: 1px solid #000;
}

.count {
  display: flex;
  flex: 1;
  justify-content: space-between;
  padding: 10px 9px 0 5px;
  border-left: 1px solid #000;
  font-size: 12px;
  line-height: 12px;
}

.cell.count cite {
  left: 19px;
  line-height: 8px;
}

.size {
  width: 24px;
  border-left: 1px solid #000;
  padding: 0;
  font-size: 18px;
  line-height: 25px;
}

/* views */
.views {
  position: absolute;
  inset: -1px;
  width: calc(100% + 2px);
  height: calc(100% + 2px);
}

.beam,
.mark {
  fill: none;
  stroke: #000;
}

.preview {
  fill: none;
  stroke: #20b840;
  stroke-dasharray: 1 2;
  shape-rendering: crispEdges;
}

.corners {
  fill: none;
  stroke: #20c838;
  stroke-width: 2;
}

.arrows {
  fill: #88aabc;
}

.angle {
  fill: #807c08;
}

.cube {
  position: absolute;
  left: 729px;
  top: 324px;
  width: 54px;
  height: 54px;
  display: flex;
  align-items: center;
  justify-content: center;
  border: 1px solid #8ca0ac;
  background: #c2d6e0;
  box-shadow: 0 5px 4px #7890a080;
  color: #7c8c9c;
  font: bold 12px/34px "Open Sans", sans-serif;
}

.cube span {
  background: #b6cedb;
}

.docbtns {
  position: absolute;
  top: 4px;
  right: 1px;
  display: flex;
  gap: 7px;
}

.docbtns svg {
  display: block;
  width: 14px;
  height: 14px;
  fill: none;
  stroke: #dfe6ee;
  stroke-width: 2;
}

.navbar {
  position: absolute;
  top: 24px;
  right: 1px;
  width: 35px;
  height: 202px;
  display: flex;
  flex-direction: column;
  align-items: center;
  justify-content: space-between;
  padding: 2px 0 2px;
  border: 2px solid #606060;
  border-radius: 5px;
  background: #c8c8c8;
}

.navbar svg {
  display: block;
  width: 24px;
  height: 26px;
  fill: #f0f0f4;
  stroke: #555a66;
}

.navbar .none {
  fill: none;
}

.navbar .dot {
  align-self: flex-end;
}

.navbar .dot svg {
  width: 10px;
  height: 10px;
  stroke: none;
  margin-right: 2px;
}

.navbar .h {
  stroke-width: 3;
}

.navbar text {
  font: bold 10px "Liberation Sans", sans-serif;
  fill: #1c58a0;
  stroke: none;
}

.navbar hr {
  width: 26px;
  margin: 0;
  border: 0;
  border-top: 1px solid #777;
}

/* dialog */
.dialog {
  position: absolute;
  left: 227px;
  top: 207px;
  width: 487px;
  padding: 0 8px 8px;
  background: #5c5a58;
  outline: 1px solid #3c4450;
  outline-offset: -1px;
  color: #000;
  line-height: 14px;
}

.dialog-title {
  display: flex;
  justify-content: space-between;
  align-items: center;
  height: 31px;
  padding: 1px 0 0 8px;
  color: #f0f0f0;
}

.dialog-title h2 {
  margin: 0;
  font: 12px/16px Roboto, sans-serif;
}

.dialog-title button {
  width: 33px;
  height: 30px;
  background: #c4574c;
  color: #000;
  font: bold 14px/20px "DejaVu Sans", sans-serif;
}

.dialog-body {
  padding: 7px 7px 0 6px;
  background: #f0f0f0;
}

.dtabs {
  display: flex;
  align-items: flex-end;
}

.dtabs button {
  height: 18px;
  border: 1px solid #8a8a90;
  border-bottom: 0;
  border-left: 0;
  background: #ececee;
  width: 40px;
}

.dtabs .active {
  position: relative;
  width: 71px;
  height: 21px;
  border-left: 1px solid #8a8a90;
  margin-bottom: -1px;
  padding-bottom: 2px;
  background: #fff;
}

.dtabs button:nth-child(3) {
  width: 86px;
}

.dtabs button:nth-child(4) {
  width: 98px;
}

.page {
  height: 282px;
  padding: 12px 11px 0;
  border: 1px solid #8a8a90;
  background: #fff;
}

.page label {
  display: block;
}

.filerow {
  display: flex;
  gap: 6px;
  margin: 4px 0 11px;
}

.combo {
  position: relative;
  display: block;
}

.combo::after {
  content: "";
  position: absolute;
  right: 6px;
  top: 6px;
  width: 5px;
  height: 5px;
  border: solid #444;
  border-width: 0 2px 2px 0;
  transform: rotate(45deg);
  pointer-events: none;
}

.combo select,
#label {
  display: block;
  width: 100%;
  height: 21px;
  padding: 0 3px;
  appearance: none;
  border: 1px solid #777;
  border-radius: 0;
  background: #fff;
  color: #000;
  font: inherit;
}

.filerow .combo {
  width: 347px;
}

.sq {
  width: 22px;
  height: 21px;
  display: flex;
  align-items: center;
  justify-content: center;
  border: 1px solid #777;
  background: #dfdfdf;
}

.sq svg {
  width: 16px;
  height: 16px;
}

.sq.big {
  width: 24px;
  height: 24px;
}

.sq.big svg {
  width: 18px;
  height: 18px;
  stroke: #3c5068;
}

.sq.on {
  background: #b8defa;
  border-color: #2c78b8;
}

.columns {
  display: flex;
}

.rep {
  width: 228px;
  height: 112px;
  margin: -6px 7px 0 0;
  padding: 6px 14px 0 4px;
  border: 1px solid #dcdcdc;
  border-radius: 3px;
}

.rep legend {
  margin-left: 1px;
  padding: 0 2px;
}

.rep > label,
.rep .labelrow {
  margin-left: 23px;
}

.reprow {
  display: flex;
  align-items: center;
  margin: 4px 0;
  gap: 7px;
}

.rep .labelrow {
  height: 16px;
  padding-right: 27px;
}

.reprow .combo {
  width: 156px;
}

.pic {
  width: 16px;
  height: 16px;
  flex: none;
}

.chain {
  fill: none;
  stroke: #8c8c8c;
}

.dots {
  fill: none;
  stroke: #777;
  stroke-width: 2;
  stroke-dasharray: 1 1;
}

.from {
  width: 20px;
  height: 20px;
}

.gear svg {
  fill: none;
  stroke: #999;
  stroke-width: 3;
}

.labelrow {
  display: flex;
  align-items: center;
}

input[type="checkbox"] {
  appearance: none;
  width: 13px;
  height: 13px;
  margin: 0 3px 0 0;
  border: 1px solid #666;
  background: #fff;
}

input[type="checkbox"]:disabled {
  margin: 0 4px 0 auto;
  border-color: #bbb;
}

input[type="checkbox"]:checked::after {
  content: "";
  display: block;
  width: 4px;
  height: 8px;
  margin: 0 0 0 3px;
  border: solid #111;
  border-width: 0 2px 2px 0;
  transform: rotate(40deg);
}

.style {
  width: 141px;
  height: 211px;
  padding: 10px 6px 0 7px;
  border: 1px solid #dcdcdc;
  border-radius: 3px;
}

.style > .labelrow:first-child {
  padding-right: 36px;
}

.modes {
  display: flex;
  gap: 3px;
  margin: 7px 1px 6px;
}

.raster {
  display: flex;
  align-items: center;
}

.tall {
  gap: 3px;
  margin: 8px 0 4px;
}

.tall label {
  align-self: flex-end;
}

.tall .first {
  margin-left: auto;
}

#label {
  padding-left: 5px;
}

.scalerow {
  margin: 13px 0 0;
}

.addview {
  display: flex;
  align-items: center;
  justify-content: center;
  width: 45px;
  height: 38px;
  margin: 172px 0 0 15px;
  background: #343e4e;
}

.addview svg {
  width: 26px;
  height: 28px;
  fill: none;
  stroke: #7c8694;
}

.addview path {
  stroke: #5fd38a;
  stroke-width: 3;
}

.actions {
  display: flex;
  align-items: center;
  height: 36px;
  padding-bottom: 1px;
}

.actions .sq {
  margin: 0 10px 0 3px;
}

.glasses {
  display: flex;
  align-items: center;
  height: 22px;
  padding: 0 6px 0 5px;
  border: 1px solid #e2e2e2;
  background: #f6f6f6;
  margin-right: auto;
}

.glasses svg {
  width: 30px;
  height: 16px;
  margin-left: 3px;
  fill: #bcdcdc;
  stroke: #222;
}

.glasses path {
  fill: none;
}

.push {
  width: 73px;
  height: 21px;
  margin: 0 2px 0 7px;
  border: 1px solid #888;
  background: #dfdfdf;
}

.push.ok {
  border-color: #3c78b0;
}

.scribble {
  position: absolute;
  left: 385px;
  top: 274px;
  width: 130px;
  height: 104px;
  fill: none;
  stroke: #f0104c;
  stroke-width: 4;
  pointer-events: none;
}

/* document tabs and status bar */
.docs {
  display: flex;
  height: 24px;
  margin-left: 243px;
}

.docs a {
  padding: 4px 10px 0 8px;
  background: #454e60;
  color: #c4c8ce;
}

.docs .active {
  width: 153px;
  padding: 2px 9px 0 8px;
  background: #3b4453;
  color: #fff;
  border-bottom: 3px solid #3d9acb;
  white-space: nowrap;
}

.docs svg {
  width: 8px;
  height: 8px;
  margin-left: 6px;
  stroke: #98a0aa;
}

.docs .menu {
  align-self: center;
  margin: 0 5px 0 auto;
}

.status {
  display: flex;
  height: 23px;
  padding: 0 1px;
  background: #2f3540;
  line-height: 25px;
}

.status .num {
  width: 40px;
  margin-left: auto;
  padding-left: 12px;
  border-left: 1px solid #b8bec6;
}

.status .mem {
  width: 52px;
  margin-left: 0;
  padding-left: 7px;
}

.taskbar {
  height: 2px;
  padding-left: 54px;
  background: #1c1c1c;
}

.taskbar::before {
  content: "";
  display: block;
  width: 344px;
  height: 2px;
  background: #f0f0f0;
}
```
